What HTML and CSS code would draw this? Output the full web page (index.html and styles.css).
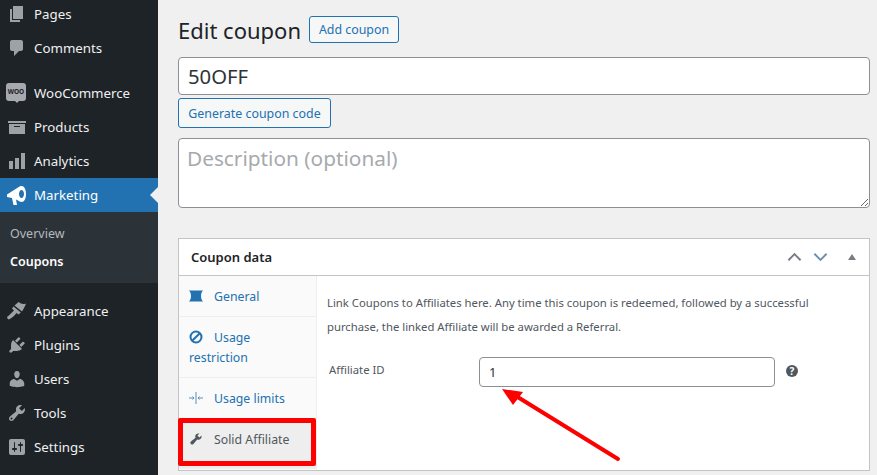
FILE: index.html
```html
<!DOCTYPE html>
<html lang="en">
<head>
  <meta charset="UTF-8" />
  <title>Edit coupon</title>
  <link rel="stylesheet" href="styles.css">
</head>
<body>
  <div class="admin">
    <nav class="sidebar">
      <ul class="menu">
        <li class="menu-item"><svg class="menu-icon" viewBox="0 0 20 20"><path d="M6 15V2h10v13H6zm-1 1h8v2H3V5h2v11z"/></svg>Pages</li>
        <li class="menu-item"><svg class="menu-icon" viewBox="0 0 20 20"><path d="M5 2h9c1.100 0 2 .9 2 2v7c0 1.100-.9 2-2 2h-2l-5 5v-5H5c-1.100 0-2-.9-2-2V4c0-1.100.9-2 2-2z"/></svg>Comments</li>
        <li class="menu-sep"></li>
        <li class="menu-item"><span class="woo-icon">WOO</span>WooCommerce</li>
        <li class="menu-item"><svg class="menu-icon" viewBox="0 0 20 20"><path d="M19 4v2H1V4h18zM2 7h16v10H2V7zm11 3V9H7v1h6z"/></svg>Products</li>
        <li class="menu-item"><svg class="menu-icon" viewBox="0 0 20 20"><path d="M18 18V2h-4v16h4zm-6 0V7H8v11h4zm-6 0v-8H2v8h4z"/></svg>Analytics</li>
        <li class="menu-item active"><svg class="menu-icon" viewBox="0 0 20 20"><path fill-rule="evenodd" d="M0 9.500 11 2.500c1-.8 2.200-1.500 3.500-1.500 2.800 0 4.500 3.400 4.500 8s-1.700 8-4.500 8c-1.300 0-2.500-.6-3.500-1.400L9 14.500l1 5.500H6.500L5 13 0 12zM14.500 5c-1.400 0-2.500 1.800-2.500 4s1.100 4 2.500 4 2.500-1.800 2.500-4-1.100-4-2.500-4z"/></svg>Marketing</li>
        <li class="submenu">
          <a class="sub-link">Overview</a>
          <a class="sub-link current">Coupons</a>
        </li>
        <li class="menu-sep"></li>
        <li class="menu-item"><svg class="menu-icon" viewBox="0 0 20 20"><path d="M7.500 4.500 11.500 1c2.500 1.800 4.500 2.600 7.500 1.500-1 2.500-2 5-4 8zM6.500 5.500l7.300 6-2.300 2-2-1.500c-1 1.500-3.500 4-7.500 6.500-.8 0-1.800-1-2-2.500C2.500 14 5 11.500 7 9.500L5 7.500z"/></svg>Appearance</li>
        <li class="menu-item"><svg class="menu-icon" viewBox="0 0 20 20"><path d="M13.110 4.360L9.870 7.600 8 5.730l3.240-3.240c.35-.34 1.050-.2 1.560.32.52.51.66 1.210.31 1.550zm-8 1.770l.91-1.120 9.010 9.010-1.190.84c-.71.71-2.630 1.160-3.820 1.160H6.140L4.900 17.260c-.59.59-1.540.59-2.120 0-.59-.58-.59-1.530 0-2.120l1.240-1.240v-3.880c0-1.130.4-3.190 1.090-3.890zm7.260 3.970l3.240-3.240c.34-.35 1.040-.21 1.550.31.52.51.66 1.210.31 1.550l-3.240 3.250z"/></svg>Plugins</li>
        <li class="menu-item"><svg class="menu-icon" viewBox="0 0 20 20"><path d="M10 9.250c-2.270 0-2.730-3.440-2.730-3.440C7 4.020 7.820 2 9.970 2c2.160 0 2.980 2.020 2.710 3.810 0 0-.41 3.440-2.680 3.440zm0 2.570L12.720 10c2.390 0 4.520 2.330 4.520 4.530v2.490s-3.650 1.130-7.240 1.130c-3.650 0-7.240-1.130-7.240-1.130v-2.490c0-2.250 1.940-4.480 4.470-4.480z"/></svg>Users</li>
        <li class="menu-item"><svg class="menu-icon" viewBox="0 0 20 20"><path d="M16.680 9.770c-1.340 1.340-3.300 1.670-4.950.99l-5.410 6.520c-.99.99-2.590.99-3.580 0s-.99-2.590 0-3.570l6.520-5.420c-.68-1.650-.35-3.610.99-4.950 1.280-1.280 3.120-1.620 4.720-1.060l-2.890 2.890 2.820 2.820 2.860-2.870c.53 1.580.18 3.390-1.080 4.650zM3.810 16.210c.4.39 1.040.39 1.430 0 .4-.4.4-1.040 0-1.430-.39-.4-1.030-.4-1.430 0-.39.39-.39 1.030 0 1.430z"/></svg>Tools</li>
        <li class="menu-item"><svg class="menu-icon" viewBox="0 0 20 20"><path d="M18 16V4c0-1.100-.9-2-2-2H4c-1.100 0-2 .9-2 2v12c0 1.100.9 2 2 2h12c1.100 0 2-.9 2-2zM8 11h1c.55 0 1 .45 1 1s-.45 1-1 1H8v1.500c0 .28-.22.5-.5.5s-.5-.22-.5-.5V13H6c-.55 0-1-.45-1-1s.45-1 1-1h1V5.500c0-.28.22-.5.5-.5s.5.22.5.5V11zm5-2h-1c-.55 0-1-.45-1-1s.45-1 1-1h1V5.500c0-.28.22-.5.5-.5s.5.22.5.5V7h1c.55 0 1 .45 1 1s-.45 1-1 1h-1v5.500c0 .28-.22.5-.5.5s-.5-.22-.5-.5V9z"/></svg>Settings</li>
      </ul>
    </nav>

    <main class="content">
      <div class="title-row">
        <h1>Edit coupon</h1>
        <button class="btn btn-add" type="button">Add coupon</button>
      </div>
      <input class="code-input" type="text" value="50OFF" />
      <button class="btn btn-generate" type="button">Generate coupon code</button>
      <textarea class="description" placeholder="Description (optional)"></textarea>

      <section class="panel">
        <header class="panel-head">
          <h2>Coupon data</h2>
          <div class="panel-controls">
            <svg class="chevron" viewBox="0 0 16 10"><path d="M1.500 8.500 8 2l6.500 6.500"/></svg>
            <svg class="chevron" viewBox="0 0 16 10"><path d="M1.500 1.500 8 8l6.500-6.500"/></svg>
            <span class="collapse"></span>
          </div>
        </header>
        <div class="panel-body">
          <ul class="tabs">
            <li class="tab"><svg class="tab-icon" viewBox="0 0 14 14"><path d="M0 1.500h14c-1.500 1.500-2 3.500-2 5.500s.5 4 2 5.500H0c1.500-1.500 2-3.500 2-5.500S1.500 3 0 1.500z"/></svg>General</li>
            <li class="tab tab-tall"><svg class="tab-icon restrict" viewBox="0 0 14 14"><circle cx="7" cy="7" r="5.500"/><path d="M3.200 10.800 10.800 3.200"/></svg>Usage restriction</li>
            <li class="tab"><svg class="tab-icon limits" viewBox="0 0 14 14"><path d="M7 1v12M0 7h5M14 7H9M3.500 5.500 5 7 3.500 8.500M10.500 5.500 9 7l1.500 1.500"/></svg>Usage limits</li>
            <li class="tab tab-active"><svg class="tab-icon" viewBox="0 0 20 20"><path d="M16.680 9.770c-1.340 1.340-3.300 1.670-4.950.99l-5.410 6.520c-.99.99-2.590.99-3.580 0s-.99-2.590 0-3.570l6.520-5.420c-.68-1.650-.35-3.610.99-4.950 1.280-1.280 3.120-1.620 4.720-1.060l-2.890 2.890 2.820 2.820 2.860-2.870c.53 1.580.18 3.390-1.080 4.650z"/></svg>Solid Affiliate</li>
          </ul>
          <div class="tab-panel">
            <p>Link Coupons to Affiliates here. Any time this coupon is redeemed, followed by a successful purchase, the linked Affiliate will be awarded a Referral.</p>
            <div class="field">
              <label for="affiliate-id">Affiliate ID</label>
              <input id="affiliate-id" type="text" value="1" />
              <span class="help">?</span>
            </div>
          </div>
        </div>
      </section>
    </main>
  </div>

  <!-- annotations drawn over the screenshot -->
  <div class="mark-box"></div>
  <svg class="mark-arrow" viewBox="0 0 130 80">
    <path class="arrow-line" d="M118 74 16 11"/>
    <path class="arrow-head" d="M2 4 23 7 13 20z"/>
  </svg>
</body>
</html>
```

FILE: styles.css
```css
html, body {
  margin: 0;
  height: 100%;
  overflow: hidden;
}
body {
  font-family: "Noto Sans", "Open Sans", sans-serif;
  font-size: 13px;
  background-color: #f0f0f1;
  color: #3c434a;
}
.admin {
  display: flex;
  height: 475px;
}

/* sidebar */
.sidebar {
  width: 158px;
  flex-shrink: 0;
  background-color: #1d2327;
  overflow: hidden;
}
.menu {
  list-style: none;
  margin: -3px 0 0;
  padding: 0;
}
.menu-item {
  position: relative;
  display: flex;
  align-items: center;
  height: 34px;
  padding-left: 7px;
  font-size: 13.300px;
  color: #f0f0f1;
}
.menu-icon {
  width: 20px;
  height: 20px;
  margin-right: 7px;
  fill: #9ca2a7;
}
.menu-sep {
  height: 11px;
}
.woo-icon {
  position: relative;
  box-sizing: border-box;
  width: 20px;
  height: 18px;
  margin: -2px 8px 0 -1px;
  border-radius: 3px;
  background-color: #a7aaad;
  color: #1d2327;
  font-size: 6.500px;
  font-weight: 700;
  line-height: 18px;
  text-align: center;
}
.woo-icon::after {
  content: "";
  position: absolute;
  left: 9px;
  top: 18px;
  border: 2px solid transparent;
  border-top-color: #a7aaad;
  border-bottom-width: 0;
}
.menu-item.active {
  background-color: #2271b1;
  color: #fff;
}
.menu-item.active .menu-icon {
  fill: #fff;
}
.menu-item.active::after {
  content: "";
  position: absolute;
  right: 0;
  top: 9px;
  border: 8px solid transparent;
  border-right-color: #f0f0f1;
  border-left-width: 0;
}
.submenu {
  display: flex;
  flex-direction: column;
  height: 71px;
  box-sizing: border-box;
  padding-top: 9px;
  background-color: #2c3338;
}
.sub-link {
  height: 28px;
  padding-left: 10px;
  font-size: 12.500px;
  line-height: 26px;
  color: #b4b9be;
}
.sub-link.current {
  color: #fff;
  font-weight: 600;
}

/* main column */
.content {
  flex: 1;
  min-width: 0;
  padding: 0 7px 0 20px;
}
.title-row {
  display: flex;
  align-items: center;
  gap: 8px;
  height: 57px;
  padding-top: 2px;
  box-sizing: border-box;
}
h1 {
  margin: 0;
  font-size: 22px;
  font-weight: 400;
  color: #1d2327;
}
.btn {
  box-sizing: border-box;
  border: 1px solid #2271b1;
  border-radius: 3px;
  background-color: #f6f7f7;
  color: #2271b1;
  font-family: inherit;
  font-size: 12.400px;
  padding: 0 10px;
}
.btn-add {
  height: 27px;
  width: 90px;
  padding: 0;
}
.btn-generate {
  display: block;
  width: 153px;
  height: 30px;
  margin: 3px 0 10px;
  padding: 0;
}
.code-input {
  display: block;
  box-sizing: border-box;
  width: 100%;
  height: 38px;
  padding: 0 9px;
  border: 1px solid #8c8f94;
  border-radius: 4px;
  background-color: #fff;
  color: #2c3338;
  font-family: inherit;
  font-size: 20.300px;
}
.description {
  display: block;
  box-sizing: border-box;
  width: 100%;
  height: 70px;
  padding: 5px 8px;
  border: 1px solid #8c8f94;
  border-radius: 4px;
  background-color: #fff;
  font-family: inherit;
  font-size: 20.800px;
}
.description::placeholder {
  color: #a7aaad;
}

/* coupon data box */
.panel {
  box-sizing: border-box;
  height: 233px;
  margin-top: 30px;
  border: 1px solid #c3c4c7;
  background-color: #fff;
}
.panel-head {
  box-sizing: border-box;
  display: flex;
  align-items: center;
  justify-content: space-between;
  height: 37px;
  padding: 0 13px 0 12px;
  border-bottom: 1px solid #c3c4c7;
}
h2 {
  margin: 0;
  font-size: 13px;
  font-weight: 600;
  color: #1d2327;
}
.panel-controls {
  display: flex;
  align-items: center;
  gap: 11px;
}
.chevron {
  width: 15px;
  height: 10px;
  fill: none;
  stroke: #787c82;
  stroke-width: 2;
}
.chevron + .chevron {
  stroke: #6d8fab;
}
.collapse {
  margin-left: 9px;
  border: 4.500px solid transparent;
  border-top-width: 0;
  border-bottom: 6px solid #787c82;
}
.panel-body {
  display: flex;
  height: 194px;
}
.tabs {
  list-style: none;
  width: 137px;
  margin: 0;
  padding: 0;
  background-color: #fafafa;
  border-right: 1px solid #eee;
}
.tab {
  box-sizing: border-box;
  height: 41px;
  padding: 0 10px;
  border-bottom: 1px solid #eee;
  color: #2271b1;
  font-size: 12.300px;
  line-height: 41px;
}
.tab-tall {
  height: 61px;
  padding-top: 11px;
  line-height: 20px;
}
.tab-icon {
  width: 14px;
  height: 14px;
  margin-right: 11px;
  vertical-align: -2px;
  fill: #2271b1;
}
.restrict {
  fill: none;
  stroke: #2271b1;
  stroke-width: 2;
}
.limits {
  fill: none;
  stroke: #5b8fba;
  stroke-width: 1;
}
.tab-active {
  height: 50px;
  border-bottom: 0;
  background-color: #eee;
  color: #50575e;
}
.tab-active .tab-icon {
  fill: #50575e;
}
.tab-panel {
  flex: 1;
  padding: 0 10px;
  color: #50575e;
  font-size: 11.300px;
}
.tab-panel p {
  margin: 15px 0 0;
  line-height: 24px;
}
.field {
  display: flex;
  align-items: center;
  margin-top: 18px;
}
.field label {
  width: 150px;
  margin-left: 2px;
  margin-bottom: 6px;
}
.field input {
  box-sizing: border-box;
  width: 296px;
  height: 30px;
  padding: 0 9px;
  border: 1px solid #8c8f94;
  border-radius: 4px;
  color: #2c3338;
  font-family: inherit;
  font-size: 13px;
}
.help {
  width: 12px;
  height: 12px;
  margin-left: 11px;
  margin-bottom: 2px;
  border-radius: 50%;
  background-color: #50575e;
  color: #fff;
  font-size: 10px;
  font-weight: 700;
  line-height: 12px;
  text-align: center;
}

/* red annotations */
.mark-box {
  position: absolute;
  left: 178px;
  top: 418px;
  width: 138px;
  height: 48px;
  box-sizing: border-box;
  border: 5px solid #fd0000;
  border-radius: 2px;
}
.mark-arrow {
  position: absolute;
  left: 500px;
  top: 385px;
  width: 130px;
  height: 80px;
}
.arrow-line {
  fill: none;
  stroke: #fd0000;
  stroke-width: 4;
  stroke-linecap: round;
}
.arrow-head {
  fill: #fd0000;
}
```
